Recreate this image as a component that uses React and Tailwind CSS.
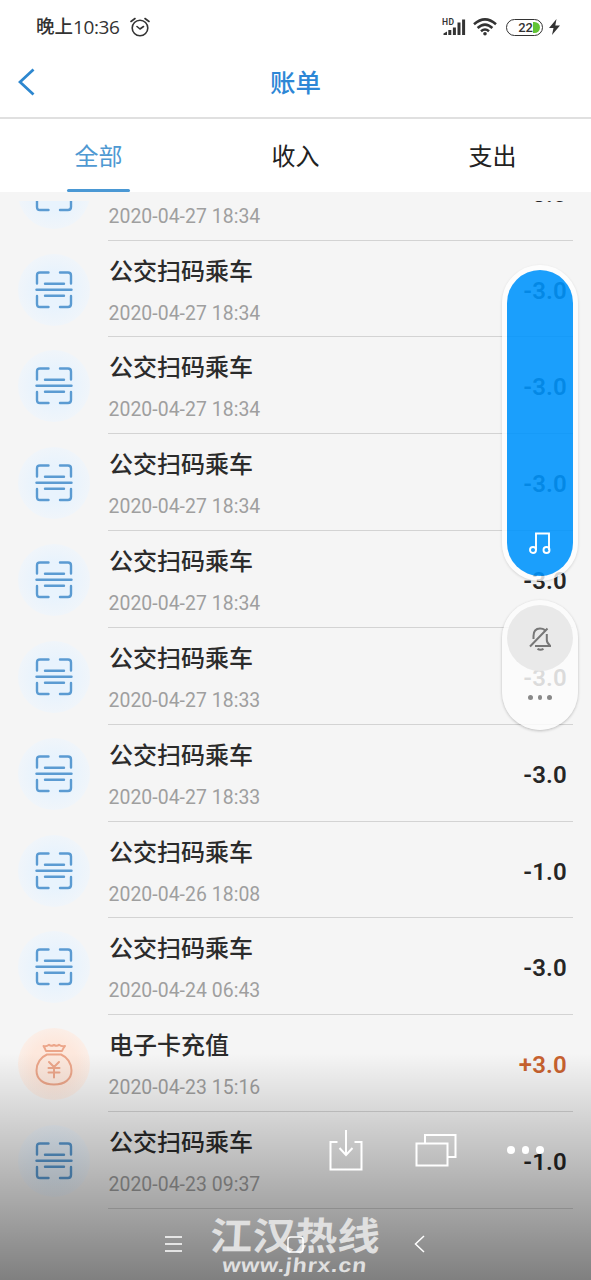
const transactions = [
  { kind: 'bus', title: '公交扫码乘车', time: '2020-04-27 18:34', amount: '-3.0' },
  { kind: 'bus', title: '公交扫码乘车', time: '2020-04-27 18:34', amount: '-3.0' },
  { kind: 'bus', title: '公交扫码乘车', time: '2020-04-27 18:34', amount: '-3.0' },
  { kind: 'bus', title: '公交扫码乘车', time: '2020-04-27 18:34', amount: '-3.0' },
  { kind: 'bus', title: '公交扫码乘车', time: '2020-04-27 18:34', amount: '-3.0' },
  { kind: 'bus', title: '公交扫码乘车', time: '2020-04-27 18:33', amount: '-3.0' },
  { kind: 'bus', title: '公交扫码乘车', time: '2020-04-27 18:33', amount: '-3.0' },
  { kind: 'bus', title: '公交扫码乘车', time: '2020-04-26 18:08', amount: '-1.0' },
  { kind: 'bus', title: '公交扫码乘车', time: '2020-04-24 06:43', amount: '-3.0' },
  { kind: 'topup', title: '电子卡充值', time: '2020-04-23 15:16', amount: '+3.0' },
  { kind: 'bus', title: '公交扫码乘车', time: '2020-04-23 09:37', amount: '-1.0' },
];

function ScanIcon() {
  return (
    <svg className="size-[38px]" viewBox="0 0 38 38" fill="none" stroke="#5b9bd2" strokeWidth="2.4" strokeLinecap="round">
      <path d="M13.500 1.500H5Q2 1.500 2 4.500v8M25 1.500h8q3 0 3 3v8M13.500 36H5q-3 0-3-3v-8M25 36h8q3 0 3-3v-8" />
      <path d="M1.500 18.700h35" />
      <path d="M10 12.700h19M10 24.700h19" />
    </svg>
  );
}

function MoneyBagIcon() {
  return (
    <svg className="h-[44px] w-[38px]" viewBox="0 0 38 44" fill="none" stroke="#eca68a" strokeWidth="2" strokeLinecap="round" strokeLinejoin="round">
      <path d="M11 9Q10 6.500 8.500 4q3 .8 5.500-1.200 2 1.800 5 .2 3 1.600 5-.2Q26.500 4.800 30 4 28 6.500 27 9Z" />
      <path d="M12 12.500h14C32 15 36.500 21 36.500 28.500c0 9-7 14-17.500 14s-17.500-5-17.500-14C1.500 21 6 15 12 12.500Z" />
      <path d="m14 20 5 5 5-5M19 25v10.500M13.500 26h11M13.500 30.500h11" />
    </svg>
  );
}

function Row({ kind, title, time, amount }) {
  const topup = kind === 'topup';
  return (
    <li className="flex h-[96.85px] shrink-0 pr-[18px] pl-[18px]">
      <div className={`mt-[13px] mr-[18px] flex size-[72px] shrink-0 items-center justify-center rounded-full ${topup ? 'bg-radial from-[#fde8dd] from-45% to-[#fbeee7] to-70%' : 'bg-radial from-[#e8f3fd] from-35% to-[#f0f5fa] to-70%'}`}>
        {topup ? <MoneyBagIcon /> : <ScanIcon />}
      </div>
      <div className="flex flex-1 items-start justify-between border-b border-[#d3d3d3]">
        <div className="pt-[15px] pl-[1px]">
          <div className="text-[24px] leading-[32px] font-medium text-[#2b2b2b]">{title}</div>
          <div className="mt-[14px] -ml-[0.5px] font-['Roboto'] text-[19.4px] leading-6 tracking-[0.05px] text-[#9f9f9f]">{time}</div>
        </div>
        <div className={`mt-[36px] mr-[6px] font-['Roboto'] text-[24px] leading-7 font-semibold tracking-[0.2px] ${topup ? 'text-[#c8622f]' : 'text-[#262626]'}`}>
          {amount}
        </div>
      </div>
    </li>
  );
}

function StatusBar() {
  return (
    <div className="flex h-[54px] items-center pr-[31px] pl-[36px] text-[#333]">
      <span className="flex w-[85px] items-center text-[18.5px] leading-6 font-medium whitespace-nowrap">
        晚上<span className="font-['Open_Sans'] text-[19px] tracking-[-0.4px]">10:36</span>
      </span>
      <svg className="ml-[9px] size-5" viewBox="0 0 20 20" fill="none" stroke="#333" strokeWidth="1.600" strokeLinecap="round" strokeLinejoin="round">
        <circle cx="10" cy="11" r="7.800" />
        <path d="m7 9.500 3 2.500 3.500-2.500M1 4.500 5 1.500M19 4.500l-4-3" />
      </svg>
      <div className="ml-auto flex items-center">
        <svg className="h-[20px] w-[24px]" viewBox="0 0 24 20" fill="#333">
          <text x="0" y="7.500" fontFamily="Roboto" fontWeight="600" fontSize="8.500" letterSpacing="0.500">HD</text>
          <path d="M1.500 18v-1.500L5 14.500V18ZM6.300 18v-5h3v5ZM10.900 18v-7.500h3V18ZM15.500 18V5.500h3V18ZM20.100 18V2.500h3V18Z" />
        </svg>
        <svg className="ml-[7px] h-[18px] w-6" viewBox="0 0 24 18" fill="none" stroke="#333" strokeWidth="2.500">
          <path d="M1 6.300Q12-3.600 23 6.300M4.600 10Q12 3.200 19.400 10M8 13.300q4-3.600 8 0" />
          <circle cx="12" cy="15.800" r="1.800" fill="#333" stroke="none" />
        </svg>
        <div className="ml-[9px] flex h-[17px] w-[37px] items-center justify-end rounded-full border-[1.500px] border-[#333] pr-[2px]">
          <span className="font-['Roboto'] text-[13px] leading-none font-medium">22</span>
          <span className="h-[11px] w-[7px] rounded-r-full bg-[#62c436]" />
        </div>
        <svg className="ml-[6px] h-4 w-[11px]" viewBox="0 0 11 16" fill="#333">
          <path d="M7.500 0 0 9h4.500L3 16l8-9.500H6.300Z" />
        </svg>
      </div>
    </div>
  );
}

function Header() {
  return (
    <header className="grid h-[65px] grid-cols-3 items-center border-b-2 border-[#e0e0e0] pl-[18px]">
      <svg className="-mt-2 h-[28px] w-[17px]" viewBox="0 0 17 28" fill="none" stroke="#2d87cf" strokeWidth="2.800">
        <path d="M15.500 1.500 2 14l13.500 12.500" />
      </svg>
      <h1 className="-mt-[5px] -ml-[18px] text-center text-[25.500px] font-medium text-[#2d87d6]">账单</h1>
    </header>
  );
}

function Tabs() {
  return (
    <nav className="grid h-[73px] grid-cols-3 text-center text-[24px] text-[#222]">
      <div className="flex flex-col items-center justify-between text-[#4f99d2]">
        <span className="pt-[20px] leading-9">全部</span>
        <span className="mb-[0.500px] h-[2.500px] w-[63px] rounded-full bg-[#4a98d4]" />
      </div>
      <span className="pt-[20px] leading-9">收入</span>
      <span className="pt-[20px] leading-9">支出</span>
    </nav>
  );
}

function VolumePanel() {
  return (
    <aside className="absolute top-[265px] right-[13px] flex w-[76px] flex-col gap-[19px]">
      <div className="flex h-[316px] rounded-full border-[5px] border-white/80 shadow-[0_1px_3px_rgba(0,0,0,0.14)]">
        <div className="flex flex-1 items-end justify-center rounded-full bg-[#0094fd]/89 pb-[22px]">
          <svg className="h-[22px] w-[22px]" viewBox="0 0 22 22" fill="none" stroke="white" strokeWidth="1.900">
            <path d="M7 18V1.500h13V18" />
            <circle cx="4" cy="18" r="3" />
            <circle cx="17.500" cy="18" r="3" />
          </svg>
        </div>
      </div>
      <div className="flex h-[130px] flex-col items-center rounded-full bg-[#fbfbfb]/85 pt-[5px] shadow-[0_1px_3px_rgba(0,0,0,0.24)]">
        <div className="flex size-[66px] items-center justify-center rounded-full bg-[#e9e9e9]">
          <svg className="size-[25px]" viewBox="0 0 25 25" fill="none" stroke="#777" strokeWidth="2">
            <path d="M5.500 13V10C5.500 5 8 2.500 12 2.500q3 0 5 1.600M18.800 8v6q0 3 3.200 5.500M7 20H23M2 20.500 19.500 2.500M9.500 22.800q3 1.800 6 0" />
          </svg>
        </div>
        <div className="mt-[24px] flex gap-[5px]">
          <i className="size-[4.500px] rounded-full bg-[#888]" />
          <i className="size-[4.500px] rounded-full bg-[#888]" />
          <i className="size-[4.500px] rounded-full bg-[#888]" />
        </div>
      </div>
    </aside>
  );
}

function BottomOverlay() {
  return (
    <div className="absolute inset-x-0 bottom-0 flex h-[227px] flex-col bg-linear-to-b from-black/0 to-black/48">
      <div className="flex h-[155px] items-start pt-[77px] pl-[329px]">
        <svg className="h-[41px] w-[34px]" viewBox="0 0 34 41" fill="none" stroke="white" strokeWidth="2">
          <path d="M8.500 12H1.500v27.500h31V12h-7M17 0v25M10.500 18l6.500 7 6.500-7" />
        </svg>
        <svg className="mt-[3px] ml-[52px] h-[34px] w-[42px]" viewBox="0 0 42 34" fill="none" stroke="white" strokeWidth="2">
          <path d="M1.500 10.500h31v22h-31zM10 10V2h30.500v22H33" />
        </svg>
        <div className="mt-[16px] ml-[50px] flex gap-[7px]">
          <i className="size-[7.500px] rounded-full bg-white" />
          <i className="size-[7.500px] rounded-full bg-white" />
          <i className="size-[7.500px] rounded-full bg-white" />
        </div>
      </div>
      <div className="relative flex h-[72px] items-center pl-[165px]">
        <div className="absolute top-[12px] left-[208px] flex w-[174px] flex-col items-center text-[#e0e0e0]">
          <span className="-skew-x-3 scale-y-90 text-[42.500px] leading-[34px] font-bold whitespace-nowrap">江汉热线</span>
          <span className="mt-[1px] -skew-x-6 scale-x-115 font-['Liberation_Sans'] text-[20px] leading-[20px] font-bold tracking-[0.800px] whitespace-nowrap">www.jhrx.cn</span>
        </div>
        <svg className="relative h-4 w-[18px]" viewBox="0 0 18 16" stroke="white" strokeWidth="1.300">
          <path d="M0 1h17M0 8h17M0 15h17" />
        </svg>
        <svg className="relative ml-[104px] size-[17px]" viewBox="0 0 18 18" fill="none" stroke="white" strokeWidth="1.600">
          <rect x="1" y="1" width="16" height="16" rx="3" />
        </svg>
        <svg className="relative ml-[110px] h-[18px] w-[11px]" viewBox="0 0 11 18" fill="none" stroke="white" strokeWidth="1.500">
          <path d="M10 1 1.500 9l8.500 8" />
        </svg>
      </div>
    </div>
  );
}

export default function App() {
  return (
    <div className="relative flex h-[1280px] w-[591px] flex-col overflow-hidden bg-white font-['Roboto','Noto_Sans_CJK_SC',sans-serif]">
      <StatusBar />
      <Header />
      <Tabs />
      <main className="flex min-h-0 flex-1 flex-col bg-[#f5f5f5] pt-[9px]">
        <div className="min-h-0 flex-1 overflow-hidden">
          <ul className="-mt-[57.300px] flex flex-col">
            {transactions.map((item, index) => (
              <Row key={index} {...item} />
            ))}
          </ul>
        </div>
      </main>
      <VolumePanel />
      <BottomOverlay />
    </div>
  );
}
